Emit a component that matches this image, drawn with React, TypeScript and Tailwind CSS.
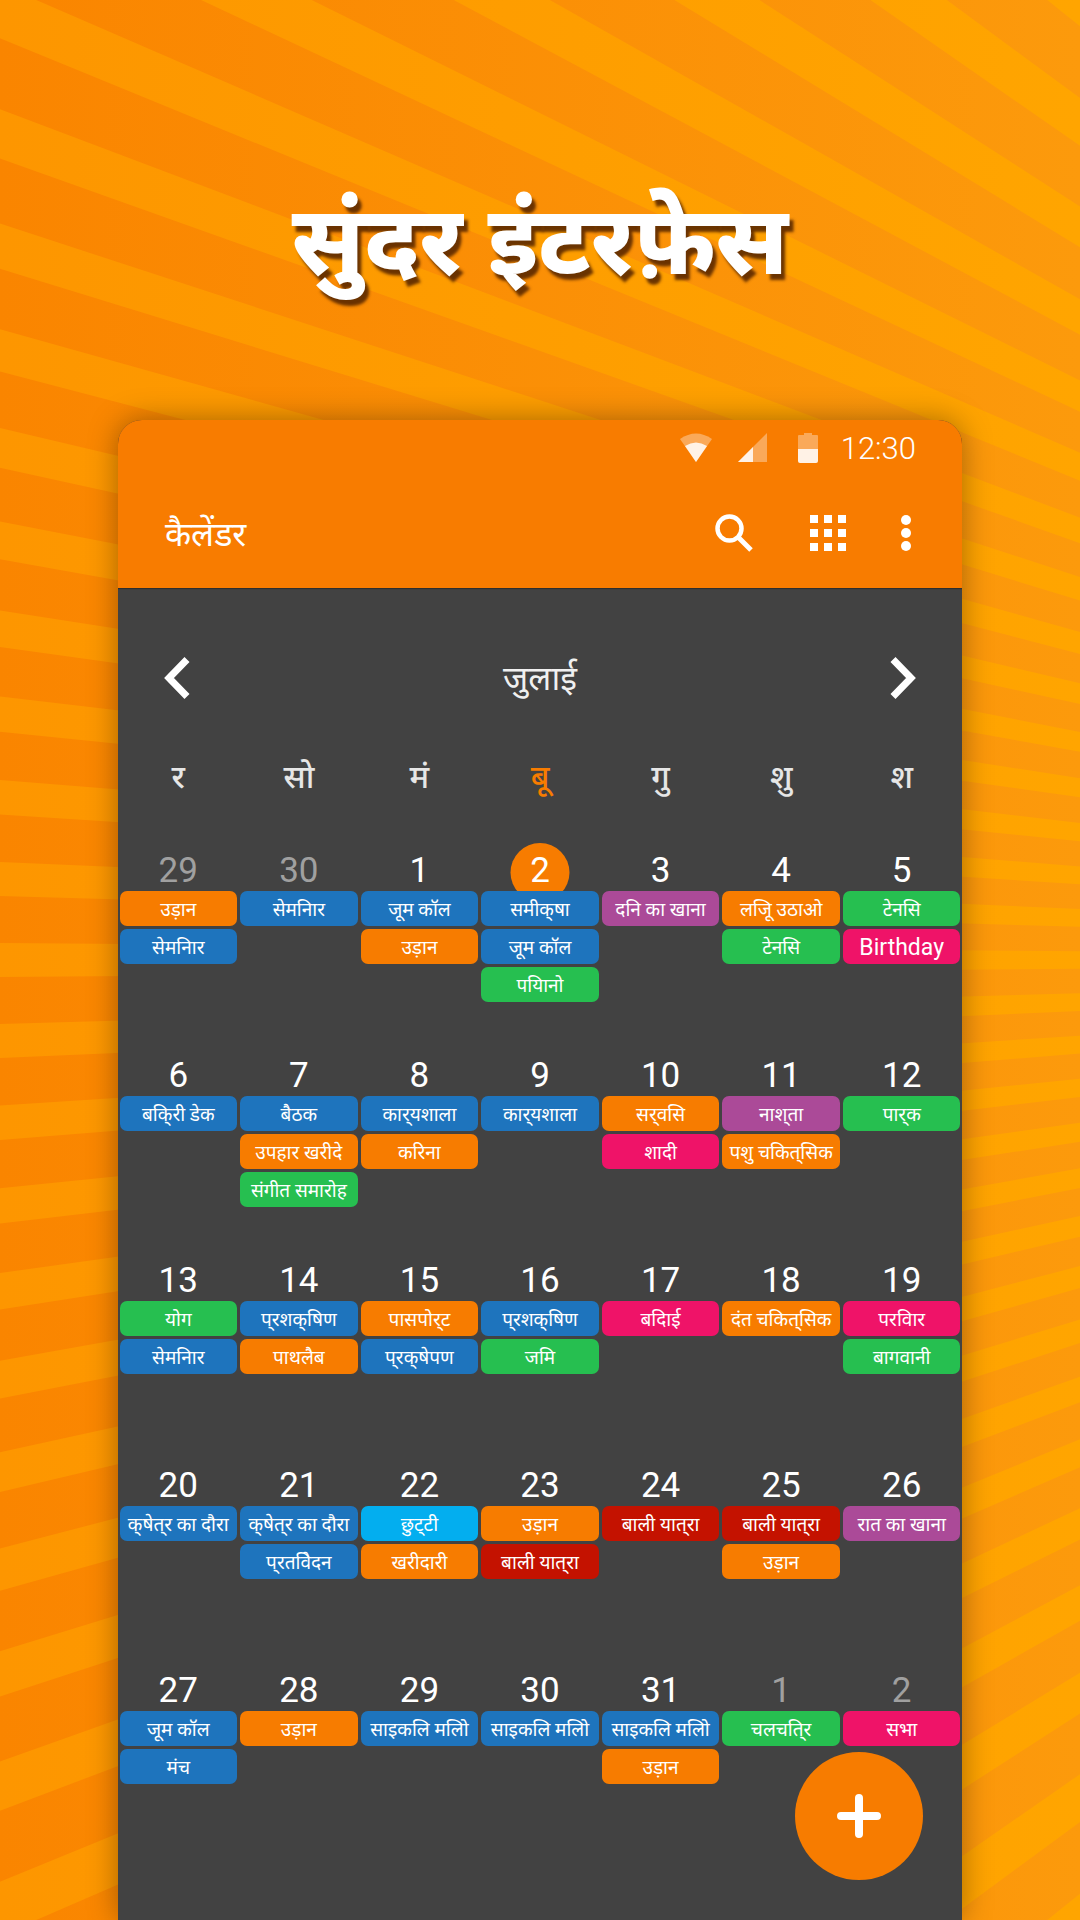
type Color = "blue" | "orange" | "green" | "purple" | "pink" | "red" | "sky"

const chipColors: Record<Color, string> = {
  blue: "bg-[#1e74bd]",
  orange: "bg-[#f77c00]",
  green: "bg-[#26bf50]",
  purple: "bg-[#ab4a98]",
  pink: "bg-[#ef1368]",
  red: "bg-[#c41200]",
  sky: "bg-[#03aeef]",
}

type Day = { date: number; muted?: boolean; today?: boolean; events: [string, Color][] }

const weeks: Day[][] = [
  [
    { date: 29, muted: true, events: [["उड़ान", "orange"], ["सेमनिार", "blue"]] },
    { date: 30, muted: true, events: [["सेमनिार", "blue"]] },
    { date: 1, events: [["जूम कॉल", "blue"], ["उड़ान", "orange"]] },
    { date: 2, today: true, events: [["समीक्\u200cषा", "blue"], ["जूम कॉल", "blue"], ["पयिानो", "green"]] },
    { date: 3, events: [["दनि का खाना", "purple"]] },
    { date: 4, events: [["लजिू उठाओ", "orange"], ["टेनसि", "green"]] },
    { date: 5, events: [["टेनसि", "green"], ["Birthday", "pink"]] },
  ],
  [
    { date: 6, events: [["बकि्\u200cरी डेक", "blue"]] },
    { date: 7, events: [["बैठक", "blue"], ["उपहार खरीदे", "orange"], ["संगीत समारोह", "green"]] },
    { date: 8, events: [["कार्\u200cयशाला", "blue"], ["करिना", "orange"]] },
    { date: 9, events: [["कार्\u200cयशाला", "blue"]] },
    { date: 10, events: [["सर्\u200cवसि", "orange"], ["शादी", "pink"]] },
    { date: 11, events: [["नाश्\u200cता", "purple"], ["पशु चकित्\u200cसिक", "orange"]] },
    { date: 12, events: [["पार्\u200cक", "green"]] },
  ],
  [
    { date: 13, events: [["योग", "green"], ["सेमनिार", "blue"]] },
    { date: 14, events: [["प्\u200cरशक्\u200cषिण", "blue"], ["पाथलैब", "orange"]] },
    { date: 15, events: [["पासपोर्\u200cट", "orange"], ["प्\u200cरक्\u200cषेपण", "blue"]] },
    { date: 16, events: [["प्\u200cरशक्\u200cषिण", "blue"], ["जमि", "green"]] },
    { date: 17, events: [["बदिाई", "pink"]] },
    { date: 18, events: [["दंत चकित्\u200cसिक", "orange"]] },
    { date: 19, events: [["परविार", "pink"], ["बागवानी", "green"]] },
  ],
  [
    { date: 20, events: [["क्\u200cषेत्\u200cर का दौरा", "blue"]] },
    { date: 21, events: [["क्\u200cषेत्\u200cर का दौरा", "blue"], ["प्\u200cरतविेदन", "blue"]] },
    { date: 22, events: [["छुट्\u200cटी", "sky"], ["खरीदारी", "orange"]] },
    { date: 23, events: [["उड़ान", "orange"], ["बाली यात्\u200cरा", "red"]] },
    { date: 24, events: [["बाली यात्\u200cरा", "red"]] },
    { date: 25, events: [["बाली यात्\u200cरा", "red"], ["उड़ान", "orange"]] },
    { date: 26, events: [["रात का खाना", "purple"]] },
  ],
  [
    { date: 27, events: [["जूम कॉल", "blue"], ["मंच", "blue"]] },
    { date: 28, events: [["उड़ान", "orange"]] },
    { date: 29, events: [["साइकलि मलिो", "blue"]] },
    { date: 30, events: [["साइकलि मलिो", "blue"]] },
    { date: 31, events: [["साइकलि मलिो", "blue"], ["उड़ान", "orange"]] },
    { date: 1, muted: true, events: [["चलचति्\u200cर", "green"]] },
    { date: 2, muted: true, events: [["सभा", "pink"]] },
  ],
]

const weekdays = ["र", "सो", "मं", "बू", "गु", "शु", "श"]

// the burst is stretched sideways, so rays are spaced by tan() along x=0
const CX = 2250
const CY = 960
const D = 1236
const STEP = (3.75 * Math.PI) / 180
const HALF = STEP * 0.21

const rayPoints = (n: number) => {
  const a = n * STEP
  return `${CX},${CY} 0,${CY + D * Math.tan(a - HALF)} 0,${CY + D * Math.tan(a + HALF)}`
}

const rays = Array.from({ length: 33 }, (_, i) => i - 16)

const Background = () => (
  <svg className="absolute inset-0" width="1080" height="1920" viewBox="0 0 1080 1920">
    <defs>
      <linearGradient id="dark" gradientUnits="userSpaceOnUse" x1="0" y1="0" x2="1080" y2="0">
        <stop offset="0" stopColor="#fa8500" />
        <stop offset="1" stopColor="#fc9a0c" />
      </linearGradient>
      <linearGradient id="light" gradientUnits="userSpaceOnUse" x1="0" y1="0" x2="1080" y2="0">
        <stop offset="0" stopColor="#fd9600" />
        <stop offset="1" stopColor="#ffa500" />
      </linearGradient>
    </defs>
    <rect width="1080" height="1920" fill="url(#dark)" />
    {rays.map((n) => (
      <polygon key={n} points={rayPoints(n)} fill="url(#light)" />
    ))}
  </svg>
)

const StatusBar = () => (
  <div className="h-[56px] flex items-center justify-end pr-[46px] text-white">
    <svg width="32" height="30" viewBox="0 0 32 30" className="mr-[26px]">
      <path d="M16 29 L0 6 Q16 -5 32 6 Z" fill="#fff" fillOpacity="0.35" />
      <path d="M16 29 L5 13 Q16 6 27 13 Z" fill="#fff" fillOpacity="0.85" />
    </svg>
    <svg width="30" height="30" viewBox="0 0 30 30" className="mr-[30px]">
      <path d="M0 29 L29 0 V29 Z" fill="#fff" fillOpacity="0.35" />
      <path d="M0 29 L15 14 V29 Z" fill="#fff" fillOpacity="0.85" />
    </svg>
    <svg width="20" height="30" viewBox="0 0 20 30" className="mr-[23px]">
      <path d="M6 0 H14 V2 H19 Q20 2 20 3 V16 H0 V3 Q0 2 1 2 H6 Z" fill="#fff" fillOpacity="0.35" />
      <path d="M0 16 H20 V28 Q20 30 18 30 H2 Q0 30 0 28 Z" fill="#fff" fillOpacity="0.9" />
    </svg>
    <span className="font-['Roboto',sans-serif] font-light text-[31px] leading-none">12:30</span>
  </div>
)

const Toolbar = () => (
  <div className="h-[112px] flex items-center pl-[47px] pr-[50px] text-white">
    <span className="text-[34px] font-['Roboto','Noto_Sans',sans-serif] mt-[4px]">कैलेंडर</span>
    <div className="ml-auto flex items-center mt-[2px]">
      <svg width="38" height="38" viewBox="0 0 38 38" fill="none" stroke="#fff" strokeWidth="4.5">
        <circle cx="14.5" cy="14.5" r="12" />
        <path d="M23 23 L36 36" strokeWidth="5" />
      </svg>
      <svg width="36" height="36" viewBox="0 0 36 36" fill="#fff" className="ml-[57px]">
        {[0, 14, 28].map((y) =>
          [0, 14, 28].map((x) => <rect key={`${x}-${y}`} x={x} y={y} width="8" height="8" />),
        )}
      </svg>
      <svg width="12" height="36" viewBox="0 0 12 36" fill="#fff" className="ml-[54px]">
        <circle cx="6" cy="5" r="5" />
        <circle cx="6" cy="18" r="5" />
        <circle cx="6" cy="31" r="5" />
      </svg>
    </div>
  </div>
)

const Chevron = ({ flip }: { flip?: boolean }) => (
  <svg width="26" height="42" viewBox="0 0 26 42" fill="none" stroke="#fff" strokeWidth="7" className={flip ? "-scale-x-100" : ""}>
    <path d="M23 2.5 L5 21 L23 39.5" />
  </svg>
)

const Cell = ({ day }: { day: Day }) => (
  <div className="px-[1.6px] h-[205px] relative">
    <div className="h-[52px] flex justify-center items-center relative">
      {day.today && <div className="absolute left-1/2 -translate-x-1/2 top-[4px] w-[59px] h-[59px] rounded-full bg-[#f77c00]" />}
      <span
        className={`relative font-['Roboto',sans-serif] text-[35px] leading-none mt-[11px] ${
          day.muted ? "text-[#a0a0a0]" : "text-white"
        }`}
      >
        {day.date}
      </span>
    </div>
    <div className="flex flex-col gap-[3px] relative">
      {day.events.map(([label, color], i) => (
        <div
          key={i}
          className={`h-[35px] rounded-[7px] flex items-center justify-center whitespace-nowrap overflow-hidden text-white pt-[3px] ${chipColors[color]} ${
            label === "Birthday" ? "text-[23px]" : "text-[19px]"
          }`}
        >
          {label}
        </div>
      ))}
    </div>
  </div>
)

export default function App() {
  return (
    <div className="relative w-[1080px] h-[1920px] overflow-hidden font-['Roboto','Noto_Sans',sans-serif]">
      <Background />
      <div className="relative flex flex-col items-center">
        <h1 className="h-[420px] pt-[177px] text-[96px] leading-[120px] font-extrabold text-white [text-shadow:4px_6px_3px_rgba(90,40,0,0.9)] font-['Noto_Sans',serif]">
          सुंदर इंटरफ़ेस
        </h1>
        <div className="relative w-[844px] h-[1500px] rounded-t-[24px] overflow-hidden bg-[#424242] shadow-[0_0_30px_rgba(0,0,0,0.35)]">
          <div className="h-[168px] bg-[#f87c00] shadow-[0_1px_1px_rgba(0,0,0,0.3)]">
            <StatusBar />
            <Toolbar />
          </div>
          <div className="h-[139px] flex items-end justify-between px-[46px] pb-[28px]">
            <Chevron />
            <span className="text-[34px] text-[#f0f0f0] leading-[42px]">जुलाई</span>
            <Chevron flip />
          </div>
          <div className="grid grid-cols-7 h-[100px] items-center">
            {weekdays.map((d, i) => (
              <span key={d} className={`text-center text-[32px] font-medium ${i === 3 ? "text-[#f77c00]" : "text-[#e6e6e6]"}`}>
                {d}
              </span>
            ))}
          </div>
          <div className="grid grid-cols-7 pt-[12px]">
            {weeks.flat().map((day, i) => (
              <Cell key={i} day={day} />
            ))}
          </div>
          <button className="absolute left-[677px] top-[1332px] w-[128px] h-[128px] rounded-full bg-[#f77c00] flex items-center justify-center">
            <svg width="44" height="44" viewBox="0 0 44 44" stroke="#fff" strokeWidth="8" strokeLinecap="round">
              <path d="M22 4 V40 M4 22 H40" />
            </svg>
          </button>
        </div>
      </div>
    </div>
  )
}
